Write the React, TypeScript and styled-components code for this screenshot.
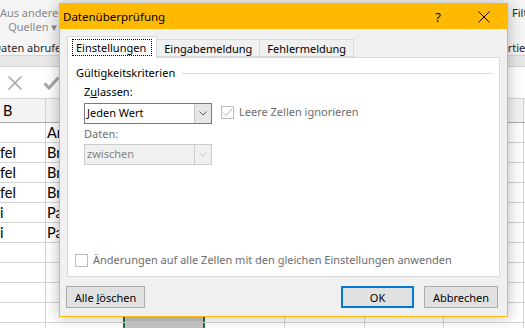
import styled, { createGlobalStyle } from "styled-components"

const UI_FONT = `"Noto Sans", "DejaVu Sans", sans-serif`
const CELL_FONT = `Lato, "Liberation Sans", sans-serif`

const GlobalStyle = createGlobalStyle`
  html, body {
    margin: 0;
    padding: 0;
    background: #fff;
  }
  * {
    box-sizing: border-box;
  }
  #root {
    width: 525px;
    height: 328px;
    overflow: hidden;
  }
`

const Screen = styled.div`
  position: relative;
  width: 525px;
  height: 328px;
  overflow: hidden;
  background: #fff;
  font-family: ${UI_FONT};
`

/**
 * Excel background
 */

const Ribbon = styled.div`
  display: flex;
  height: 56px;
  background: #f5f5f5;
  border-bottom: 1px solid #d4d4d4;
  font-size: 11px;
`

const RibbonGroup = styled.div<{ $offset?: number; $right?: boolean }>`
  display: flex;
  flex-direction: column;
  margin-left: ${(p) => (p.$right ? "auto" : `${p.$offset ?? 0}px`)};
  width: ${(p) => (p.$right ? "30px" : "200px")};
  white-space: nowrap;
`

const RibbonButton = styled.div<{ $pad?: number }>`
  width: 67px;
  padding-top: 6px;
  padding-left: ${(p) => p.$pad ?? 0}px;
  line-height: 14px;
  text-align: ${(p) => (p.$pad ? "left" : "center")};
  color: ${(p) => (p.$pad ? "#262626" : "#8a8a8a")};
`

const GroupLabel = styled.div<{ $shift?: number }>`
  margin-top: auto;
  margin-left: ${(p) => p.$shift ?? 0}px;
  line-height: 14px;
  color: #262626;
`

const Band = styled.div`
  height: 11px;
  background: #e8e8e8;
  border-bottom: 1px solid #d4d4d4;
`

const FormulaBar = styled.div`
  display: flex;
  align-items: center;
  gap: 20px;
  height: 31px;
  padding-left: 7px;
`

const SheetRow = styled.div<{ $header?: boolean }>`
  display: flex;
  height: ${(p) => (p.$header ? 25 : 20)}px;
  background: ${(p) => (p.$header ? "#f3f3f3" : "#fff")};
  border-top: ${(p) => (p.$header ? "1px solid #d4d4d4" : "none")};
  border-bottom: 1px solid ${(p) => (p.$header ? "#ababab" : "#d4d4d4")};
  font-family: ${CELL_FONT};
  font-size: 14.5px;
`

const Cell = styled.div<{ $w: number; $selected?: boolean; $pad?: number }>`
  flex: none;
  width: ${(p) => p.$w}px;
  padding-left: ${(p) => p.$pad ?? 1}px;
  line-height: 19px;
  white-space: nowrap;
  overflow: hidden;
  color: #000;
  border-right: ${(p) => (p.$selected ? "2px solid #217346" : "1px solid #d4d4d4")};
  background: ${(p) => (p.$selected ? "#c6c6c6" : "transparent")};
  box-shadow: ${(p) => (p.$selected ? "-2px 0 0 #217346" : "none")};
`

const HeaderCell = styled(Cell)`
  line-height: 23px;
  padding-left: 3px;
  border-right-color: #d4d4d4;
`

const COLS = [46, 79, 80, 80, 80, 79, 80, 20]
const SELECTED = 2

const ROWS: string[][] = [
  ["", "Art"],
  ["fel", "Brot"],
  ["fel", "Brot"],
  ["fel", "Brot"],
  ["i", "Pasta"],
  ["i", "Pasta"],
  [],
  [],
  [],
  [],
  [],
]

const CancelIcon = () => (
  <svg width="16" height="16" viewBox="0 0 16 16">
    <path d="M1.5 1.5 L14.5 14.5 M14.5 1.5 L1.5 14.5" stroke="#a6a6a6" strokeWidth="1.6" fill="none" />
  </svg>
)

const EnterIcon = () => (
  <svg width="17" height="14" viewBox="0 0 17 14">
    <path d="M1.5 7.5 L6 12 L15.5 1.5" stroke="#a6a6a6" strokeWidth="3" fill="none" />
  </svg>
)

/**
 * Dialog
 */

const Dialog = styled.div`
  position: absolute;
  left: 59px;
  top: 3px;
  width: 449px;
  height: 314px;
  display: flex;
  flex-direction: column;
  border: 1px solid #ffb900;
  background: #f0f0f0;
  box-shadow: 0 0 14px rgba(0, 0, 0, 0.28);
  font-family: ${UI_FONT};
  font-size: 11px;
  color: #000;
`

const TitleBar = styled.div`
  display: flex;
  align-items: center;
  height: 25px;
  padding-left: 3px;
  background: #ffb900;
`

const Title = styled.div`
  flex: 1;
  font-size: 11.5px;
  line-height: 16px;
  padding-top: 1px;
`

const CaptionButton = styled.div`
  display: flex;
  align-items: center;
  justify-content: center;
  width: 46px;
  height: 25px;
  font-size: 13px;
`

const Body = styled.div`
  flex: 1;
  display: flex;
  flex-direction: column;
  padding: 7px 7px 0;
`

const TabStrip = styled.div`
  display: flex;
  align-items: flex-end;
  height: 21px;
`

const Tab = styled.div<{ $active?: boolean }>`
  position: relative;
  z-index: ${(p) => (p.$active ? 1 : 0)};
  height: ${(p) => (p.$active ? 22 : 18)}px;
  margin-bottom: ${(p) => (p.$active ? -1 : 0)}px;
  margin-left: ${(p) => (p.$active ? 0 : -1)}px;
  padding: ${(p) => (p.$active ? "2px 4px 0" : "1px 7px 0")};
  line-height: 16px;
  border: 1px solid #d9d9d9;
  border-bottom: ${(p) => (p.$active ? "none" : "1px solid #d9d9d9")};
  background: ${(p) => (p.$active ? "#fff" : "#f0f0f0")};
  white-space: nowrap;

  &:first-child {
    margin-left: 0;
  }
`

const FocusBox = styled.span`
  display: block;
  padding: 0 5px 0 3px;
  border: 1px dotted #000;
  line-height: 15px;
`

const Panel = styled.div`
  display: flex;
  flex-direction: column;
  height: 220px;
  padding: 7px 6px 8px 8px;
  background: #fff;
  border: 1px solid #d9d9d9;
`

const GroupHeader = styled.div`
  display: flex;
  align-items: center;
  gap: 7px;
  line-height: 16px;
`

const Rule = styled.div`
  flex: 1;
  height: 1px;
  background: #dcdcdc;
`

const Fields = styled.div`
  display: flex;
  flex-direction: column;
  align-items: flex-start;
  padding-left: 8px;
`

const FieldLabel = styled.div<{ $disabled?: boolean; $gap: number }>`
  margin-top: ${(p) => p.$gap}px;
  line-height: 16px;
  color: ${(p) => (p.$disabled ? "#6d6d6d" : "#000")};
`

const FieldRow = styled.div<{ $gap: number }>`
  display: flex;
  align-items: flex-start;
  gap: 9px;
  margin-top: ${(p) => p.$gap}px;
`

const Select = styled.div<{ $disabled?: boolean }>`
  display: flex;
  width: 128px;
  height: 21px;
  border: 1px solid ${(p) => (p.$disabled ? "#cccccc" : "#7a7a7a")};
  background: ${(p) => (p.$disabled ? "#f0f0f0" : "#fff")};
  color: ${(p) => (p.$disabled ? "#838383" : "#000")};
`

const SelectValue = styled.div`
  flex: 1;
  padding-left: 2px;
  line-height: 18px;
`

const SelectArrow = styled.div<{ $disabled?: boolean }>`
  display: flex;
  align-items: center;
  justify-content: center;
  width: 17px;
  border-left: 1px solid ${(p) => (p.$disabled ? "#cccccc" : "#c4c4c4")};
  background: ${(p) => (p.$disabled ? "#efefef" : "#e6e6e6")};
`

const CheckRow = styled.label<{ $top?: number; $left?: number }>`
  display: flex;
  align-items: center;
  gap: 5px;
  margin-top: ${(p) => (p.$top === undefined ? "auto" : `${p.$top}px`)};
  margin-left: ${(p) => p.$left ?? 0}px;
  line-height: 16px;
  color: #6d6d6d;
  white-space: nowrap;
`

const CheckBox = styled.span`
  display: flex;
  align-items: center;
  justify-content: center;
  width: 13px;
  height: 13px;
  border: 1px solid #bcbcbc;
  background: #fff;
`

const ButtonRow = styled.div`
  display: flex;
  gap: 10px;
  margin: 9px 2px 0 -1px;
`

const Button = styled.div<{ $w: number; $primary?: boolean }>`
  display: flex;
  align-items: center;
  justify-content: center;
  width: ${(p) => p.$w}px;
  height: 22px;
  border: ${(p) => (p.$primary ? "2px solid #0078d7" : "1px solid #adadad")};
  background: #e1e1e1;
  white-space: pre;

  &:first-child {
    margin-right: auto;
  }
`

const Chevron = ({ color }: { color: string }) => (
  <svg width="8" height="5" viewBox="0 0 8 5">
    <path d="M0.5 0.5 L4 4 L7.5 0.5" stroke={color} strokeWidth="1" fill="none" />
  </svg>
)

const CheckMark = () => (
  <svg width="11" height="9" viewBox="0 0 11 9">
    <path d="M1 4.5 L4 7.5 L10 1" stroke="#b4b4b4" strokeWidth="1" fill="none" />
  </svg>
)

const CloseGlyph = () => (
  <svg width="12" height="12" viewBox="0 0 12 12">
    <path d="M0.5 0.5 L11.5 11.5 M11.5 0.5 L0.5 11.5" stroke="#000" strokeWidth="1" fill="none" />
  </svg>
)

export default function App() {
  return (
    <Screen>
      <GlobalStyle />

      <Ribbon>
        <RibbonGroup $offset={-1}>
          <RibbonButton>
            Aus anderen
            <br />
            Quellen ▾
          </RibbonButton>
          <GroupLabel $shift={-6}>Daten abrufen und transformieren</GroupLabel>
        </RibbonGroup>
        <RibbonGroup $right>
          <RibbonButton $pad={17}>Filtern</RibbonButton>
          <GroupLabel>Sortieren und Filtern</GroupLabel>
        </RibbonGroup>
      </Ribbon>
      <Band />
      <FormulaBar>
        <CancelIcon />
        <EnterIcon />
      </FormulaBar>

      <SheetRow $header>
        {COLS.map((w, i) => (
          <HeaderCell key={i} $w={w}>
            {i === 0 ? "B" : ""}
          </HeaderCell>
        ))}
      </SheetRow>
      {ROWS.map((row, r) => (
        <SheetRow key={r}>
          {COLS.map((w, i) => (
            <Cell key={i} $w={w} $pad={i === 0 ? 0 : 1} $selected={i === SELECTED}>
              {row[i] ?? ""}
            </Cell>
          ))}
        </SheetRow>
      ))}

      <Dialog>
        <TitleBar>
          <Title>Datenüberprüfung</Title>
          <CaptionButton>?</CaptionButton>
          <CaptionButton>
            <CloseGlyph />
          </CaptionButton>
        </TitleBar>

        <Body>
          <TabStrip>
            <Tab $active>
              <FocusBox>Einstellungen</FocusBox>
            </Tab>
            <Tab>Eingabemeldung</Tab>
            <Tab>Fehlermeldung</Tab>
          </TabStrip>

          <Panel>
            <GroupHeader>
              <span>Gültigkeitskriterien</span>
              <Rule />
            </GroupHeader>

            <Fields>
              <FieldLabel $gap={3}>
                Z<u>u</u>lassen:
              </FieldLabel>
              <FieldRow $gap={3}>
                <Select>
                  <SelectValue>Jeden Wert</SelectValue>
                  <SelectArrow>
                    <Chevron color="#606060" />
                  </SelectArrow>
                </Select>
                <CheckRow $top={1}>
                  <CheckBox>
                    <CheckMark />
                  </CheckBox>
                  Leere Zellen ignorieren
                </CheckRow>
              </FieldRow>
              <FieldLabel $gap={2} $disabled>
                Daten:
              </FieldLabel>
              <FieldRow $gap={2}>
                <Select $disabled>
                  <SelectValue>zwischen</SelectValue>
                  <SelectArrow $disabled>
                    <Chevron color="#c2c2c2" />
                  </SelectArrow>
                </Select>
              </FieldRow>
            </Fields>

            <CheckRow $left={-1}>
              <CheckBox />
              Änderungen auf alle Zellen mit den gleichen Einstellungen anwenden
            </CheckRow>
          </Panel>

          <ButtonRow>
            <Button $w={79}>
              <span>
                Alle <u>l</u>öschen
              </span>
            </Button>
            <Button $w={73} $primary>
              OK
            </Button>
            <Button $w={74}>Abbrechen</Button>
          </ButtonRow>
        </Body>
      </Dialog>
    </Screen>
  )
}
